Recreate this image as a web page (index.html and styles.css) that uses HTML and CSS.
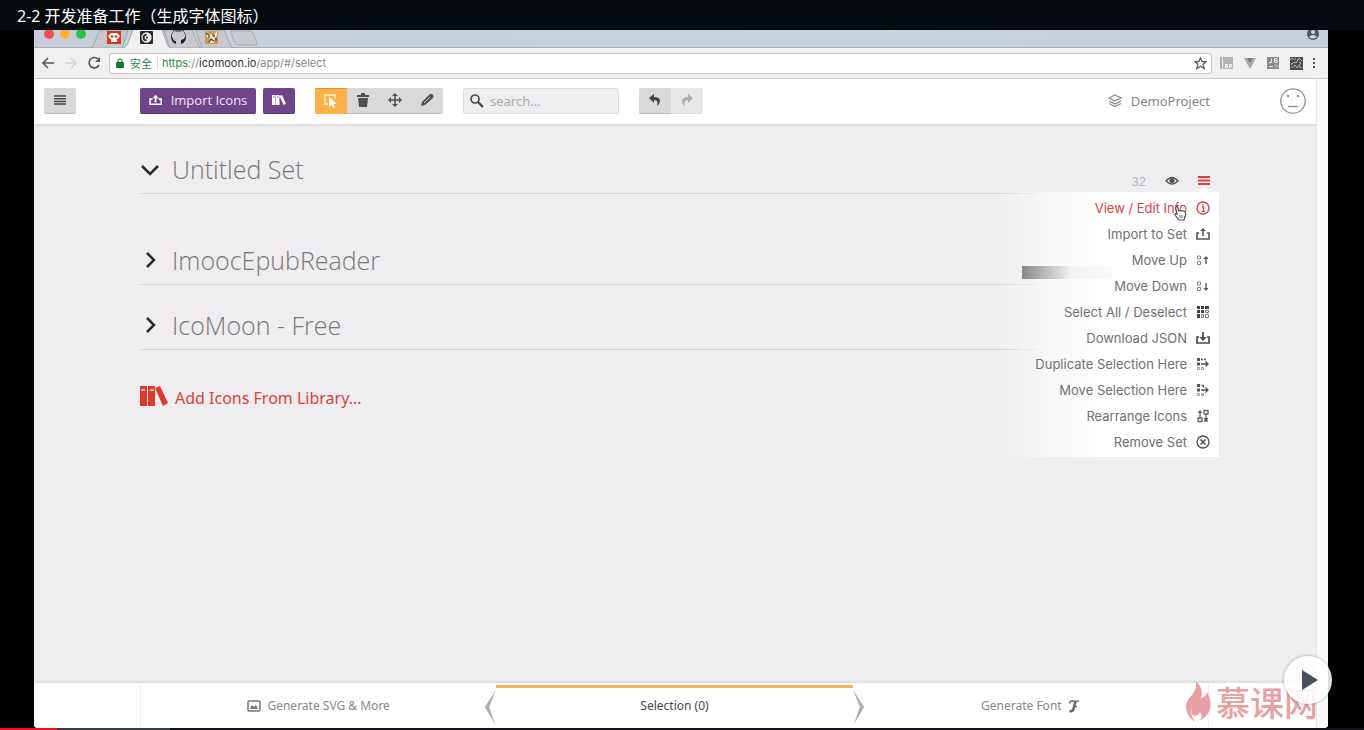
FILE: index.html
```
<!DOCTYPE html>
<html lang="zh-CN">
<head>
<meta charset="utf-8">
<title>2-2 开发准备工作（生成字体图标）</title>
<link rel="stylesheet" href="styles.css">
</head>
<body>
<header class="lesson-title">2-2 开发准备工作（生成字体图标）</header>
<div class="stage">
  <div class="tab-strip">
    <svg class="tabs" width="240" height="18" viewBox="0 0 240 18" aria-hidden="true">
      <circle cx="15" cy="4" r="5" fill="#fb4d4b"/><circle cx="31" cy="4" r="5" fill="#fcb12c"/><circle cx="47" cy="4" r="5" fill="#27c63f"/>
      <path d="M58 18 66 0H94L88 18ZM130 0H158L166 18H136ZM162 0H190L198 18H168Z" fill="#c6c8cd" stroke="#a4a8ae"/>
      <path d="M90 18Q94 15 96 8L99 0H128L133 14Q134 18 138 18Z" fill="#f0f0f1"/>
      <path d="M90 18Q94 15 96 8L99 0M128 0L133 14Q134 18 138 18" fill="none" stroke="#a4a8ae"/>
      <path d="M197 1H216Q218 1 219 3L223 13Q223 15 221 15H204Q202 15 201 13L197 3Z" fill="#c8cace" stroke="#a4a8ae"/>
      <rect x="73" y="1" width="14" height="13" fill="#db3417"/><path d="M74 6 77 3h6l3 3-2 3h-1v3h-6V9h-1Z" fill="#fff"/><circle cx="78" cy="6.500" r="1.300" fill="#db3417"/><circle cx="82" cy="6.500" r="1.300" fill="#db3417"/>
      <rect x="106" y="1" width="13" height="13" rx="1" fill="#29292b"/><circle cx="112.500" cy="7.500" r="4.500" fill="none" stroke="#eee" stroke-width="1.300"/><circle cx="112.500" cy="7.500" r="2" fill="#eee"/><path d="M112.500 3a4.500 4.500 0 0 1 0 9Z" fill="#eee"/><circle cx="113" cy="7.500" r="1" fill="#29292b"/>
      <path d="M142 14v-3c-3 0-3-2-4-2 2 0 2 1 4 1-5-1-5-6-3-7V0l3 1.500h5L150 0v3c2 2 2 6-3 7v4c7-2 6-12 1-13.500h-7C135 3 136 12 142 14Z" fill="#1b1d20"/>
      <rect x="171" y="1" width="13" height="13" fill="#c89a55"/><path d="M172 1l3 3h5l3-3v5l-2 2-1 5h-4V9l-3-2Z" fill="#efe2c4"/><path d="M172 3l3 2v3M178 5h2v2M175 12l2-3 3 2M182 8v3" stroke="#4c3924" stroke-width="1.200" fill="none"/>
    </svg>
    <svg class="profile" width="14" height="14" viewBox="0 0 14 14" aria-hidden="true"><circle cx="7" cy="4" r="6" fill="#505862"/><circle cx="7" cy="2" r="2" fill="#d0d5dc"/><path d="M3 7q4-4 8 0q-4 3-8 0" fill="#d0d5dc"/></svg>
  </div>
  <div class="browser-bar">
    <button class="nav-btn" aria-label="Back"><svg width="14" height="14" viewBox="0 0 14 14"><path d="M13 7H2M7 2 2 7l5 5" fill="none" stroke="#55565a" stroke-width="1.600"/></svg></button>
    <button class="nav-btn" aria-label="Forward"><svg width="14" height="14" viewBox="0 0 14 14"><path d="M1 7h11M7 2l5 5-5 5" fill="none" stroke="#d2d2d4" stroke-width="1.600"/></svg></button>
    <button class="nav-btn" aria-label="Reload"><svg width="14" height="14" viewBox="0 0 14 14"><path d="M12 9a5.200 5.200 0 1 1-1-6" fill="none" stroke="#55565a" stroke-width="1.700"/><path d="M13 1v5H8Z" fill="#55565a"/></svg></button>
    <div class="address">
      <svg width="8" height="11" viewBox="0 0 8 11" aria-hidden="true"><path d="M2 5V3a2 2 0 0 1 4 0v2" fill="none" stroke="#12782f" stroke-width="1.200"/><rect y="4" width="8" height="6" rx="1" fill="#12782f"/></svg>
      <span class="secure">安全</span><span class="divider"></span>
      <span class="url"><span class="scheme">https</span>://<b>icomoon.io</b>/app/#/select</span>
      <svg class="star" width="13" height="13" viewBox="0 0 14 14" aria-hidden="true"><path d="m7 1 1.800 4H13L9.700 7.800 11 12.500 7 10l-4 2.500 1.300-4.700L1 5h4.200Z" fill="none" stroke="#55565a" stroke-width="1.300"/></svg>
    </div>
    <div class="extensions">
      <svg width="14" height="14" viewBox="0 0 14 14" aria-hidden="true"><path d="M1 1v12" stroke="#999" stroke-width="1.500"/><rect x="3" y="1" width="10" height="12" fill="#b5b5b5"/><path d="M5.500 12V8.500h2v2h-2m1 0 1 1.500M9.500 12V8.500h2v2h-2" stroke="#fff" fill="none"/></svg>
      <svg width="14" height="14" viewBox="0 0 14 14" aria-hidden="true"><path d="M1 2h12L7 13Z" fill="#aaa"/><path d="M4 2h6L7 7Z" fill="#777"/></svg>
      <svg width="14" height="14" viewBox="0 0 14 14" aria-hidden="true"><rect x="1" y="1" width="12" height="12" fill="#888"/><path d="M3 6.500h2.500v-4M8.500 2.500h2.500v4H8.500Zm0 2H11M3 10.500h4" stroke="#eee" fill="none"/><path d="M8 10h5" stroke="#aaa" stroke-width="3"/></svg>
      <svg width="14" height="14" viewBox="0 0 14 14" aria-hidden="true"><rect x="1" y="1" width="13" height="13" fill="#4c4c4c"/><path d="m1 4 2-2 2 2M2 9l3-3 2 1 3-5 3 3M2 12l4-3 2 3 4-5M6 2l1 2M9 10l4 2M10 6l2 1M3 7l-1 1" stroke="#b8b8b8" fill="none"/></svg>
      <svg width="4" height="14" viewBox="0 0 4 14" aria-hidden="true"><path d="M1 2h2v2H1ZM1 6h2v2H1ZM1 10h2v2H1Z" fill="#55565a"/></svg>
    </div>
  </div>
  <div class="app">
    <div class="app-body">
      <div class="toolbar">
        <button class="btn menu-btn" aria-label="Menu"><svg width="12" height="10" viewBox="0 0 12 10"><path d="M0 1h12M0 3.700h12M0 6.400h12M0 9h12" stroke="#454545" stroke-width="1.500"/></svg></button>
        <button class="btn import-btn"><svg width="14" height="12" viewBox="0 0 16 14"><path d="M4 6H1v6h13V6h-3" fill="none" stroke="#fff" stroke-width="1.800"/><path d="M7.500 10V3" stroke="#fff" stroke-width="2"/><path d="m4 5 3.500-4L11 5Z" fill="#fff"/></svg>Import Icons</button>
        <button class="btn library-btn" aria-label="Library"><svg width="14" height="10" viewBox="0 0 28 20"><path fill="#fff" d="M0 0h7v20H0ZM8 0h7v20H8ZM15 2l5-2 8 17-5 3Z"/><path d="M2 4h3M10 4h3" stroke="#70448a" stroke-width="2"/></svg></button>
        <div class="tool-group">
          <button class="btn active" aria-label="Select"><svg width="14" height="14" viewBox="0 0 14 14"><path d="M4 10H1V1h10v4" fill="none" stroke="#fff0d8" stroke-width="1.300"/><path d="M5 3v10l2.500-2.500L9 14l2-1-1.500-3H13Z" fill="#fff"/></svg></button>
          <button class="btn" aria-label="Delete"><svg width="12" height="14" viewBox="0 0 12 14"><path d="M0 2h4V0h4v2h4v2H0ZM1 5h10l-1 9H2Z" fill="#505050"/></svg></button>
          <button class="btn" aria-label="Move"><svg width="14" height="14" viewBox="0 0 14 14"><path d="M7 2v10M2 7h10" stroke="#505050" stroke-width="1.500"/><path d="m7 0 3 3H4ZM7 14l-3-3h6ZM0 7l3-3v6ZM14 7l-3 3V4Z" fill="#505050"/></svg></button>
          <button class="btn" aria-label="Edit"><svg width="14" height="14" viewBox="0 0 14 14"><path d="m1 13 1-4 8-8q2-1 3 1t0 3l-8 7Z" fill="#505050"/><path d="m4 10 6-6" stroke="#ccc"/></svg></button>
        </div>
        <label class="search"><svg width="14" height="14" viewBox="0 0 14 14" aria-hidden="true"><circle cx="5" cy="5" r="4" fill="none" stroke="#484848" stroke-width="1.700"/><path d="m8 8 5 5" stroke="#484848" stroke-width="2.200"/></svg><input type="text" placeholder="search..." aria-label="Search"></label>
        <div class="history">
          <button class="btn" aria-label="Undo"><svg width="12" height="12" viewBox="0 0 12 12"><path d="M0 4 5 0v3q6 0 6 4 0 3-3 5 2-6-3-6v3Z" fill="#454545"/></svg></button>
          <button class="btn redo" aria-label="Redo"><svg width="12" height="12" viewBox="0 0 12 12"><path d="M12 4 7 0v3Q1 3 1 7q0 3 3 5-2-6 3-6v3Z" fill="#adadad"/></svg></button>
        </div>
        <a class="project" href="#"><svg width="14" height="14" viewBox="0 0 14 14" aria-hidden="true"><path d="m7 1 6 3-6 3-6-3ZM1 7l6 3 6-3M1 9.500l6 3 6-3" fill="none" stroke="#8b8b8b" stroke-width="1.200"/></svg>DemoProject</a>
        <button class="face" aria-label="Account"><svg width="26" height="26" viewBox="0 0 26 26"><circle cx="13" cy="13" r="12.200" fill="none" stroke="#929292" stroke-width="1.300"/><circle cx="8" cy="8" r="1.300" fill="#929292"/><circle cx="18" cy="8" r="1.300" fill="#929292"/><path d="M8 18.500h10" stroke="#929292" stroke-width="1.400"/></svg></button>
      </div>
      <main class="sets">
        <section class="set first">
          <button class="fold" aria-label="Collapse"><svg width="20" height="20" viewBox="0 0 20 20"><path d="m2 6 8 8 8-8" fill="none" stroke="#292929" stroke-width="2.500"/></svg></button>
          <h2>Untitled Set</h2>
          <div class="set-tools"><span>32</span>
            <svg width="14" height="10" viewBox="0 0 14 10" aria-hidden="true"><path d="M1 5q6-7 12 0-6 6-12 0Z" fill="#eee" stroke="#555" stroke-width="1.300"/><circle cx="7" cy="4.500" r="2.600" fill="#555"/></svg>
            <button class="set-menu-btn" aria-label="Set menu"><svg width="12" height="10" viewBox="0 0 12 10"><path d="M0 1h12M0 4.500h12M0 8h12" stroke="#d94343" stroke-width="2"/></svg></button>
          </div>
          <div class="set-menu">
            <button class="item current">View / Edit Info<svg viewBox="0 0 14 14"><circle cx="7" cy="7" r="6" fill="none" stroke="#d94343" stroke-width="1.400"/><path d="M6 6h1.500v4M5.500 10.300h3.500M6.300 3.800h1.500" fill="none" stroke="#d94343" stroke-width="1.300"/></svg></button>
            <button class="item">Import to Set<svg viewBox="0 0 14 14"><path d="M3 6H1v6h12V6h-2M7 9V3" fill="none" stroke="#555" stroke-width="1.600"/><path d="m4 4 3-3 3 3Z" fill="#555"/></svg></button>
            <button class="item">Move Up<svg viewBox="0 0 14 14"><path d="M1.500 3h3v3h-3ZM1.500 8.500h3v3h-3Z" fill="none" stroke="#888"/><path d="M10 11V4" stroke="#555" stroke-width="1.400"/><path d="m7.500 6 2.500-3 2.500 3Z" fill="#555"/></svg></button>
            <button class="item">Move Down<svg viewBox="0 0 14 14"><path d="M1.500 3h3v3h-3ZM1.500 8.500h3v3h-3Z" fill="none" stroke="#888"/><path d="M10 4v7" stroke="#555" stroke-width="1.400"/><path d="m7.500 9 2.500 3 2.500-3Z" fill="#555"/></svg></button>
            <button class="item">Select All / Deselect<svg viewBox="0 0 14 14"><path d="M1 1h3v3H1ZM5 1h3v3H5ZM9 1h4v3H9ZM1 5h3v3H1ZM5 5h3v3H5ZM1 9h3v4H1Z" fill="#444"/><path d="M9.500 5.500h3v2h-3ZM5.500 9.500h2v3h-2ZM9.500 9.500h3v3h-3Z" fill="none" stroke="#777"/></svg></button>
            <button class="item">Download JSON<svg viewBox="0 0 14 14"><path d="M3 6H1v6h12V6h-2M7 1v6" fill="none" stroke="#4c4c4c" stroke-width="1.700"/><path d="m3.500 6 3.500 4 3.500-4Z" fill="#4c4c4c"/></svg></button>
            <button class="item">Duplicate Selection Here<svg viewBox="0 0 14 14"><path d="M1 1h3v3H1ZM1 5.500h3v3H1Z" fill="#555"/><path d="M1.500 10.500h2v2h-2ZM5.500 10.500h2v2h-2Z" fill="none" stroke="#999"/><path d="M5 7h7M9.500 4.500 12 7l-2.500 2.500M5 2.500h2M8 2.500h2" fill="none" stroke="#555" stroke-width="1.400"/></svg></button>
            <button class="item">Move Selection Here<svg viewBox="0 0 14 14"><path d="M1 1h3v3H1ZM1 5.500h3v3H1Z" fill="#555"/><path d="M1.500 10.500h2v2h-2ZM5.500 10.500h2v2h-2Z" fill="none" stroke="#999"/><path d="M5 7h7M9.500 4.500 12 7l-2.500 2.500M5.500 2.500h2v2" fill="none" stroke="#555" stroke-width="1.300"/></svg></button>
            <button class="item">Rearrange Icons<svg viewBox="0 0 14 14"><path d="M4 3v6M10 5v7M8 12h4M2 12.500V9h4v3.500ZM8 1.500h4V5H8Z" fill="none" stroke="#666" stroke-width="1.300"/><path d="m1.500 4 2.500-3 2.500 3ZM7.500 9l2.500 3 2.500-3Z" fill="#555"/></svg></button>
            <button class="item">Remove Set<svg viewBox="0 0 14 14"><circle cx="7" cy="7" r="6" fill="none" stroke="#4c4c4c" stroke-width="1.300"/><path d="m4.500 4.500 5 5m0-5-5 5" stroke="#4c4c4c" stroke-width="1.500"/></svg></button>
            <svg class="pointer" width="14" height="16" viewBox="0 0 14 16" aria-hidden="true"><path d="M4 9 2.500 3q.500-2 2-1L6 6l2-.500 2 .500 2 .500q1 1 .500 4L11 15H6L2 10q-1-2 2-1Z" fill="#f7f7f7" stroke="#4c4c4c" stroke-width="1.200"/><path d="M7 10v3M9 10v3" stroke="#777"/></svg>
          </div>
        </section>
        <section class="set">
          <button class="fold" aria-label="Expand"><svg width="20" height="20" viewBox="0 0 20 20"><path d="m7 2 7 7-7 7" fill="none" stroke="#292929" stroke-width="2.500"/></svg></button>
          <h2>ImoocEpubReader</h2>
        </section>
        <section class="set">
          <button class="fold" aria-label="Expand"><svg width="20" height="20" viewBox="0 0 20 20"><path d="m7 2 7 7-7 7" fill="none" stroke="#292929" stroke-width="2.500"/></svg></button>
          <h2>IcoMoon - Free</h2>
        </section>
        <a class="add-link" href="#"><svg width="28" height="20" viewBox="0 0 28 20" aria-hidden="true"><path fill="#df3a2e" d="M0 0h7v20H0ZM8 0h7v20H8ZM15 2l5-2 8 17-5 3Z"/><path d="M1 4h4M10 4h4" stroke="#f0d8d6" stroke-width="1.500"/></svg>Add Icons From Library...</a>
      </main>
      <footer class="bottom-tabs">
        <button class="bottom-tab left"><svg width="14" height="12" viewBox="0 0 14 12"><rect x="1" y="1" width="12" height="10" rx="1" fill="none" stroke="#777" stroke-width="1.500"/><path d="m3 9 2-4 2 2 2-2 2 4Z" fill="#777"/></svg>Generate SVG &amp; More</button>
        <button class="bottom-tab selection"><svg class="edge edge-left" width="12" height="38" viewBox="0 0 14 40"><path d="M14 0 1 20l12 20L6 20Z" fill="#aeaeae"/></svg>Selection (0)<svg class="edge edge-right" width="12" height="38" viewBox="0 0 14 40"><path d="m0 0 13 20L1 40l7-20Z" fill="#aeaeae"/></svg></button>
        <button class="bottom-tab right">Generate Font<svg width="12" height="14" viewBox="0 0 12 14"><path d="M2 4.500Q1 1.500 5 2q4 1 6-.500M5.500 7.500H9" fill="none" stroke="#686868" stroke-width="1.500"/><path d="M7.500 2 5.500 10q-1 3-4 2" fill="none" stroke="#686868" stroke-width="2.500"/></svg></button>
      </footer>
    </div>
    <div class="scroll-track"></div>
  </div>
</div>
<div class="progress"><div class="buffered"></div><div class="played"></div></div>
<div class="watermark"><svg width="26" height="42" viewBox="0 0 26 42" aria-hidden="true"><path d="M11 0Q19 8 16 17q4 0 6-6 6 12 2 20-3 5-9 9 3-6 0-9-2 4-6 4-4-2-2-9-3 6 3 15Q1 35 1 26q0-6 6-12 5-6 4-14Z" fill="currentColor"/></svg><span>慕课网</span></div>
<button class="play" aria-label="Play"><svg width="18" height="22" viewBox="0 0 18 22"><path d="m1 1 16 10L1 21Z" fill="#46505a"/></svg></button>
</body>
</html>
```
FILE: styles.css
```
* { box-sizing: border-box; }
body { margin: 0; min-height: 100vh; display: flex; flex-direction: column; background: #000; font-family: "Noto Sans", "Noto Sans CJK SC", sans-serif; color: #888; overflow: hidden; }
button { font: inherit; color: inherit; border: 0; padding: 0; background: none; cursor: pointer; }
a { text-decoration: none; }
svg { display: block; flex: none; }
.lesson-title { height: 30px; padding-left: 17px; display: flex; align-items: center; background: #060b10; color: #fff; font-size: 16px; }
.stage { flex: 1; margin: 0 36px 0 34px; display: flex; flex-direction: column; border-radius: 0 0 4px 4px; overflow: hidden; background: #efedf0; }
.tab-strip { height: 18px; display: flex; justify-content: space-between; background: linear-gradient(90deg, #c6cedb, #c8d4db 60%, #c9cfda); border-bottom: 1px solid #a9adb3; }
.profile { margin-right: 8px; }
.browser-bar { height: 31px; padding: 0 12px 0 7px; display: flex; align-items: center; background: #f0f0f1; border-bottom: 1px solid #c9c9ca; }
.nav-btn { width: 23px; }
.address { flex: 1; height: 21px; margin-left: -1px; padding: 0 4px 0 6px; display: flex; align-items: center; background: #fff; border: 1px solid #c2c2c3; border-radius: 3px; font-family: Roboto, "Noto Sans CJK SC", sans-serif; font-size: 12px; }
.secure { margin-left: 6px; font-size: 11px; color: #2e8546; }
.divider { width: 1px; height: 13px; margin: 0 4px 0 5px; background: #ddd; }
.url { font-family: Inter, sans-serif; font-size: 11px; }
.url b { font-weight: 400; color: #333; }
.scheme { color: #2e8546; }
.star { margin-left: auto; }
.extensions { margin-left: 8px; display: flex; gap: 9px; }
.app { flex: 1; display: flex; }
.app-body { flex: 1; display: flex; flex-direction: column; }
.scroll-track { width: 12px; background: #fafafa; border-left: 1px solid #e6e6e8; }
.toolbar { height: 46px; padding: 0 10px 2px 9px; display: flex; align-items: center; background: #fff; border-bottom: 1px solid #ddd; box-shadow: 0 1px 2px #e0e0e2; font-size: 13px; }
.btn { width: 32px; height: 26px; display: flex; align-items: center; justify-content: center; background: #d9d9da; border-bottom: 1px solid #bfbfc0; border-radius: 2px; }
.menu-btn { margin: 0 64px 0 1px; }
.import-btn { width: 116px; gap: 8px; background: #70448a; border-color: #583570; color: #f0e9f4; font-family: "Open Sans", sans-serif; }
.library-btn { margin: 0 20px 0 7px; background: #70448a; border-color: #583570; }
.tool-group, .history { display: flex; border-radius: 2px; overflow: hidden; }
.tool-group .btn, .history .btn { border-radius: 0; }
.tool-group .active { background: #fdb044; border-top: 1px solid #d99433; border-bottom-color: #fdb044; }
.search { width: 156px; height: 26px; margin: 0 20px; padding: 0 6px; display: flex; align-items: center; gap: 6px; background: #efedf0; border: 1px solid #dcdcde; border-radius: 2px; }
.search input { flex: 1; min-width: 0; border: 0; outline: 0; padding: 0; background: none; font: 13px "Noto Sans", sans-serif; color: #777; }
.search input::placeholder { color: #aaa; }
.history .redo { background: #e8e8e9; border-color: #dfdfe0; }
.project { margin-left: auto; display: flex; align-items: center; gap: 9px; color: #858585; }
.face { margin-left: 70px; }
.sets { flex: 1; padding: 21px 97px 0 106px; }
.set { position: relative; height: 48px; margin-bottom: 17px; display: flex; align-items: center; border-bottom: 1px solid #d6d5d8; }
.first { margin-bottom: 43px; }
.fold { width: 20px; margin-right: 12px; }
.set h2 { margin: 0; padding-bottom: 2px; font-family: "Open Sans", sans-serif; font-size: 25px; line-height: 34px; font-weight: 300; color: #777; }
.set-tools { margin-left: auto; padding-right: 9px; align-self: flex-end; height: 24px; display: flex; align-items: center; font-family: "Liberation Sans", sans-serif; font-size: 13px; color: #b5b5b7; }
.set-tools svg { margin-left: 19px; }
.set-menu { position: absolute; z-index: 2; right: 0; top: 46px; width: 216px; padding: 3px 0 2px; display: flex; flex-direction: column; background: linear-gradient(90deg, #efedf000, #f8f7f9 22%, #fff 46%); }
.set-menu::before { content: ""; position: absolute; right: 9px; top: -5px; border: 6px solid transparent; border-top: 0; border-bottom: 5px solid #fff; }
.set-menu::after { content: ""; position: absolute; left: 19px; top: 74px; width: 90px; height: 13px; background: linear-gradient(90deg, #878788, #dfdfe0 45%, #f3f3f4 55%, #fafafa); }
.item { height: 26px; padding-right: 9px; display: flex; align-items: center; justify-content: flex-end; gap: 9px; font-family: Inter, "Liberation Sans", sans-serif; font-size: 13px; color: #707070; white-space: nowrap; }
.item svg { width: 14px; height: 14px; }
.item.current { color: #d94343; }
.pointer { position: absolute; right: 32px; top: 13px; }
.add-link { margin-top: 34px; display: flex; gap: 7px; align-items: center; color: #d94338; font-size: 16px; line-height: 28px; }
.add-link svg { margin-bottom: 5px; }
.bottom-tabs { height: 46px; padding: 0 107px 0 106px; display: grid; grid-template-columns: 1fr 1fr 1fr; background: #fff; border-top: 1px solid #ddd; box-shadow: 0 -1px 2px #dedee0; font-size: 12px; }
.bottom-tab { position: relative; display: flex; align-items: center; justify-content: center; gap: 6px; }
.left { border-left: 1px solid #eee; }
.right { border-right: 1px solid #eee; }
.selection { margin-top: 2px; padding-bottom: 5px; border-top: 3px solid #f4b55c; color: #444; }
.edge { position: absolute; top: 0; }
.edge-left { right: 100%; }
.edge-right { left: 100%; }
.progress { position: relative; height: 2px; background: #12101a; }
.buffered, .played { position: absolute; left: 0; top: 0; height: 2px; }
.buffered { width: 170px; background: #353c43; }
.played { width: 57px; background: #f01414; }
.watermark { position: absolute; right: 46px; bottom: 7px; display: flex; align-items: center; gap: 5px; color: #e7a0a3; font-family: "Noto Sans CJK SC", sans-serif; font-size: 34px; line-height: 42px; font-weight: 500; }
.play { position: absolute; right: 32px; bottom: 26px; width: 48px; height: 48px; padding-left: 4px; display: flex; align-items: center; justify-content: center; border-radius: 50%; background: #ffffffe0; box-shadow: 0 0 3px #0006; }
```
